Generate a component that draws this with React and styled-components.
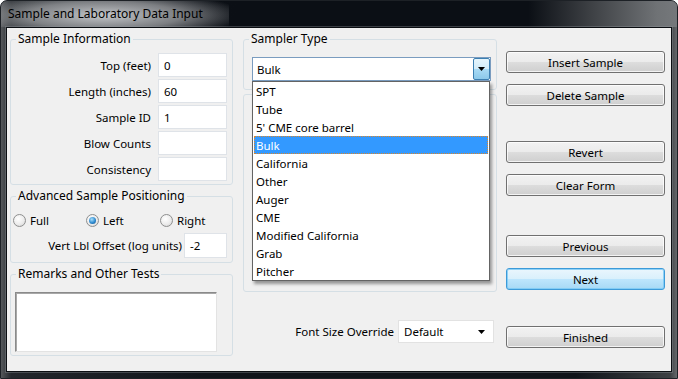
import React from 'react';
import styled, { createGlobalStyle } from 'styled-components';

const GlobalStyle = createGlobalStyle`
  html, body { margin: 0; padding: 0; background: #fff; }
  body {
    font-family: "Noto Sans", "Open Sans", sans-serif;
    font-size: 11.5px;
    color: #000;
  }
  * { box-sizing: border-box; }
`;

const Window = styled.div`
  width: 678px;
  height: 379px;
  display: flex;
  flex-direction: column;
  border: 1px solid #1d2126;
  border-radius: 7px 7px 0 0;
  overflow: hidden;
  background: linear-gradient(90deg, #55585b 0%, #23272c 1.5%, #10141a 30%, #10141a 85%, #3d4043 99%, #66696c 100%);
`;

const TitleBar = styled.div`
  height: 26px;
  display: flex;
  align-items: center;
  background: linear-gradient(90deg, rgba(0,0,0,0) 0%, #0b0f15 35%, #0b0f15 78%, #3c3f43 87%, #6f7275 97%, #75787b 100%);
`;

const Title = styled.span`
  display: inline-block;
  line-height: 26px;
  font-size: 12px;
  padding: 0 26px 0 7px;
  background: radial-gradient(ellipse 62% 95% at 45% 55%, rgba(205,207,210,0.95) 0%, rgba(160,162,165,0.75) 55%, rgba(110,112,115,0) 100%);
  color: #000;
  white-space: nowrap;
`;

const Client = styled.div`
  flex: 1;
  margin: 0 5px 6px 5px;
  border: 1px solid #0b0e12;
  box-shadow: 0 0 0 1px rgba(150,155,160,0.35);
  background: #f0f0f0;
  display: flex;
  padding: 4px 6px 0 3px;
`;

const Column = styled.div`
  width: ${p => p.$w}px;
  margin-right: ${p => p.$gap || 0}px;
  display: flex;
  flex-direction: column;
  gap: ${p => p.$rowGap || 0}px;
  position: relative;
`;

const Group = styled.fieldset`
  margin: 0;
  padding: 0;
  min-width: 0;
  height: ${p => p.$h}px;
  border: 1px solid #d5dfe5;
  border-radius: 3px;
`;

const Legend = styled.legend`
  margin-left: 5px;
  padding: 0 2px;
  line-height: 14px;
  font-size: 12px;
`;

const FieldGrid = styled.div`
  display: grid;
  grid-template-columns: 1fr 69px;
  grid-auto-rows: 24px;
  column-gap: 7px;
  row-gap: 2px;
  padding: 7px 5px 0 0;
`;

const FieldLabel = styled.label`
  display: flex;
  align-items: center;
  justify-content: flex-end;
  white-space: nowrap;
`;

const TextBox = styled.div`
  width: ${p => (p.$w ? `${p.$w}px` : 'auto')};
  height: ${p => p.$h || 24}px;
  background: #fff;
  border: 1px solid #dfe3e8;
  display: flex;
  align-items: center;
  padding-left: 5px;
`;

const RadioRow = styled.div`
  display: grid;
  grid-template-columns: 73px 74px auto;
  height: 16px;
  margin-top: 9px;
  padding-left: 2px;
`;

const RadioItem = styled.label`
  display: flex;
  align-items: center;
  gap: 4px;
`;

const RadioCircle = styled.span`
  position: relative;
  width: 13px;
  height: 13px;
  border-radius: 50%;
  border: 1px solid #8e8f8f;
  background: radial-gradient(circle at 40% 35%, #ffffff 0%, #ececec 55%, #cfcfcf 100%);

  &::after {
    content: '';
    position: absolute;
    inset: 2px;
    border-radius: 50%;
    background: ${p =>
      p.$checked
        ? 'radial-gradient(circle at 40% 35%, #a8e0fb 0%, #2f8ad0 55%, #0e4f85 100%)'
        : 'transparent'};
  }
`;

const OffsetRow = styled.div`
  display: flex;
  justify-content: flex-end;
  align-items: center;
  gap: 2px;
  margin-top: 5px;
  padding-right: 5px;
  white-space: nowrap;
`;

const RemarksBox = styled.div`
  width: 202px;
  height: 60px;
  margin: 11px 0 0 4px;
  background: #fff;
  border: 1px solid #e3e3e3;
  border-top-color: #8a8a8a;
  border-left-color: #8a8a8a;
  box-shadow: inset 1px 1px 0 #a8a8a8;
`;

const ComboWrap = styled.div`
  position: relative;
  width: ${p => p.$w}px;
  margin: ${p => p.$m || 0};
`;

const Combo = styled.div`
  height: ${p => p.$h}px;
  background: #fff;
  border: 1px solid ${p => (p.$focus ? '#7a9cbf' : '#e2e2e2')};
  display: flex;
  align-items: center;
  justify-content: space-between;
  padding-left: ${p => p.$pad}px;
`;

const ArrowButton = styled.span`
  width: 17px;
  align-self: stretch;
  display: flex;
  align-items: center;
  justify-content: center;
  border: 1px solid ${p => (p.$active ? '#3c7fb1' : 'transparent')};
  border-radius: 2px;
  background: ${p =>
    p.$active
      ? 'linear-gradient(#e6f5fc 0%, #d2ecf9 50%, #a9dbf5 50%, #8cc9ea 100%)'
      : 'transparent'};
  margin-right: ${p => (p.$active ? 0 : 3)}px;
`;

const Arrow = () => (
  <svg width="7" height="4" viewBox="0 0 7 4">
    <polygon points="0,0 7,0 3.5,4" fill="#000" />
  </svg>
);

const DropList = styled.ul`
  position: absolute;
  top: 100%;
  left: 0;
  width: 238px;
  margin: 0;
  padding: 0;
  list-style: none;
  background: #fff;
  border: 1px solid #646464;
  box-shadow: 2px 3px 3px rgba(0, 0, 0, 0.38);
  z-index: 10;
`;

const DropItem = styled.li`
  height: 18px;
  margin: 0 1px;
  padding-left: 2px;
  display: flex;
  align-items: center;
  white-space: nowrap;
  background: ${p => (p.$selected ? '#3399ff' : 'transparent')};
  color: ${p => (p.$selected ? '#fff' : '#000')};
  outline: ${p => (p.$selected ? '1px dotted #d9862c' : 'none')};
  outline-offset: -1px;
`;

const LabBody = styled.div`
  height: 100%;
  display: flex;
  flex-direction: column;
  justify-content: flex-end;
  align-items: flex-end;
  padding: 0 9px 3px 0;
`;

const FontRow = styled.div`
  display: flex;
  justify-content: flex-end;
  align-items: center;
  gap: 4px;
  margin-top: 24px;
  padding-right: 3px;
`;

const ButtonStack = styled.div`
  display: flex;
  flex-direction: column;
  gap: 11px;
  margin-top: ${p => p.$top}px;
`;

const Button = styled.button`
  width: 159px;
  height: 22px;
  padding: 0;
  font: inherit;
  color: #000;
  border-radius: 3px;
  border: 1px solid ${p => (p.$default ? '#3c9ad8' : '#707070')};
  background: ${p =>
    p.$default
      ? 'linear-gradient(#eaf6fd 0%, #d9f0fc 50%, #bee6fd 50%, #a7d9f5 100%)'
      : 'linear-gradient(#f2f2f2 0%, #ebebeb 50%, #dddddd 50%, #cfcfcf 100%)'};
  box-shadow: inset 0 0 0 1px ${p => (p.$default ? 'rgba(120,200,245,0.8)' : 'rgba(255,255,255,0.75)')};
`;

const fields = [
  ['Top (feet)', '0'],
  ['Length (inches)', '60'],
  ['Sample ID', '1'],
  ['Blow Counts', ''],
  ['Consistency', ''],
];

const samplers = [
  'SPT',
  'Tube',
  "5' CME core barrel",
  'Bulk',
  'California',
  'Other',
  'Auger',
  'CME',
  'Modified California',
  'Grab',
  'Pitcher',
];

const App = () => {
  return (
    <React.Fragment>
      <GlobalStyle />
      <Window>
        <TitleBar>
          <Title>Sample and Laboratory Data Input</Title>
        </TitleBar>
        <Client>
          <Column $w={223} $gap={10} $rowGap={4}>
            <Group $h={153}>
              <Legend>Sample Information</Legend>
              <FieldGrid>
                {fields.map(([label, value]) => (
                  <React.Fragment key={label}>
                    <FieldLabel>{label}</FieldLabel>
                    <TextBox>{value}</TextBox>
                  </React.Fragment>
                ))}
              </FieldGrid>
            </Group>
            <Group $h={74}>
              <Legend>Advanced Sample Positioning</Legend>
              <RadioRow>
                <RadioItem><RadioCircle />Full</RadioItem>
                <RadioItem><RadioCircle $checked />Left</RadioItem>
                <RadioItem><RadioCircle />Right</RadioItem>
              </RadioRow>
              <OffsetRow>
                Vert Lbl Offset (log units)
                <TextBox $w={43} $h={25}>-2</TextBox>
              </OffsetRow>
            </Group>
            <Group $h={89}>
              <Legend>Remarks and Other Tests</Legend>
              <RemarksBox />
            </Group>
          </Column>

          <Column $w={254} $gap={9} $rowGap={4}>
            <Group $h={58}>
              <Legend>Sampler Type</Legend>
              <ComboWrap $w={239} $m="11px 0 0 8px">
                <Combo $h={24} $pad={4} $focus>
                  Bulk
                  <ArrowButton $active><Arrow /></ArrowButton>
                </Combo>
                <DropList>
                  {samplers.map(name => (
                    <DropItem key={name} $selected={name === 'Bulk'}>{name}</DropItem>
                  ))}
                </DropList>
              </ComboWrap>
            </Group>
            <Group $h={198}>
              <LabBody>
                <TextBox $w={64} $h={22} />
              </LabBody>
            </Group>
            <FontRow>
              Font Size Override
              <ComboWrap $w={96}>
                <Combo $h={23} $pad={5}>
                  Default
                  <ArrowButton><Arrow /></ArrowButton>
                </Combo>
              </ComboWrap>
            </FontRow>
          </Column>

          <Column $w={159}>
            <ButtonStack $top={19}>
              <Button>Insert Sample</Button>
              <Button>Delete Sample</Button>
            </ButtonStack>
            <ButtonStack $top={35}>
              <Button>Revert</Button>
              <Button>Clear Form</Button>
            </ButtonStack>
            <ButtonStack $top={39}>
              <Button>Previous</Button>
              <Button $default>Next</Button>
            </ButtonStack>
            <ButtonStack $top={36}>
              <Button>Finished</Button>
            </ButtonStack>
          </Column>
        </Client>
      </Window>
    </React.Fragment>
  );
};

export default App;
